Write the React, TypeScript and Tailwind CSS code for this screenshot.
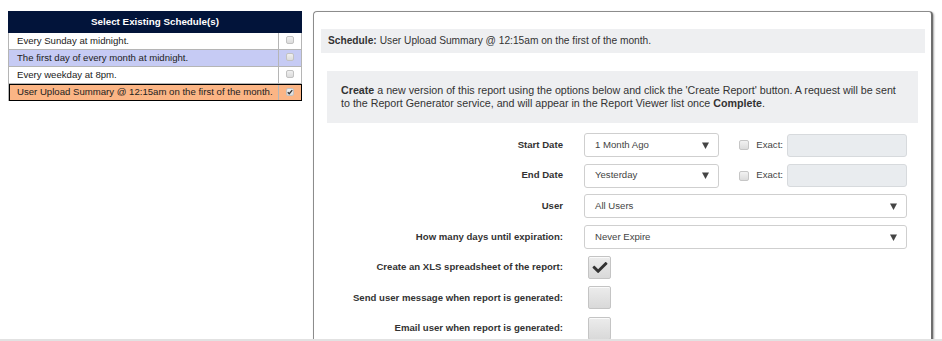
import React from "react";

const schedules = [
  { label: "Every Sunday at midnight.", tone: "plain", checked: false },
  { label: "The first day of every month at midnight.", tone: "hover", checked: false },
  { label: "Every weekday at 8pm.", tone: "plain", checked: false },
  { label: "User Upload Summary @ 12:15am on the first of the month.", tone: "active", checked: true },
];

const Arrow = () => (
  <svg width="7" height="7" viewBox="0 0 7 7" className="shrink-0">
    <path d="M0 0.5h7L3.5 7z" fill="#444" />
  </svg>
);

const TinyBox = ({ checked }: { checked: boolean }) => (
  <span className="inline-flex w-[8px] h-[8px] items-center justify-center rounded-[2px] border border-[#c2c2c2] bg-gradient-to-b from-[#f0f0f0] to-[#dcdcdc]">
    {checked && (
      <svg width="6" height="6" viewBox="0 0 8 8">
        <path d="M1 4.2l2 2L7 1.5" stroke="#333" strokeWidth="1.8" fill="none" />
      </svg>
    )}
  </span>
);

const BigBox = ({ checked }: { checked?: boolean }) => (
  <div className="w-[23px] h-[23px] rounded-[2px] border border-[#c4c4c4] bg-gradient-to-b from-[#ececec] to-[#d9d9d9] shadow-[inset_0_1px_0_#fafafa] flex items-center justify-center">
    {checked && (
      <svg width="16" height="15" viewBox="0 0 512 512">
        <path
          d="M173.9 439.4l-166.4-166.4c-10-10-10-26.2 0-36.2l36.2-36.2c10-10 26.2-10 36.2 0L192 312.7 432.1 72.6c10-10 26.2-10 36.2 0l36.2 36.2c10 10 10 26.2 0 36.2l-294.4 294.4c-10 10-26.2 10-36.2 0z"
          fill="#333"
        />
      </svg>
    )}
  </div>
);

const Select = ({ value, className }: { value: string; className: string }) => (
  <div
    className={`h-[24px] flex items-center justify-between pl-[10px] pr-[9px] rounded-[3px] border border-[#cfcfcf] bg-white text-[9.6px] text-[#444] ${className}`}
  >
    <span>{value}</span>
    <Arrow />
  </div>
);

const Exact = () => (
  <div className="flex items-center ml-[20px]">
    <span className="w-[10px] h-[10px] rounded-[2px] border border-[#c6c6c6] bg-gradient-to-b from-[#f2f2f2] to-[#dcdcdc]" />
    <span className="ml-[7px] text-[9.6px] text-[#444]">Exact:</span>
    <div className="ml-[4px] w-[120px] h-[23px] rounded-[3px] border border-[#d7dadd] bg-[#e9ecef]" />
  </div>
);

const Row = ({ label, children }: { label: string; children: React.ReactNode }) => (
  <div className="flex items-center">
    <div className="w-[236px] shrink-0 text-right font-bold text-[9.6px] text-[#333]">{label}</div>
    <div className="ml-[21px] w-[323px] flex items-center">{children}</div>
  </div>
);

export default function App() {
  return (
    <div
      className="w-[942px] h-[341px] overflow-hidden bg-white"
      style={{ fontFamily: '"Liberation Sans", Arial, sans-serif' }}
    >
      <div className="h-[339px] overflow-hidden flex items-start pl-[8px] pt-[11px]">
        <table className="w-[294px] border-collapse text-[9.6px] text-[#222] shrink-0">
          <thead>
            <tr>
              <th
                colSpan={2}
                className="h-[21px] bg-[#02143a] text-white font-bold text-[9.8px] text-center border border-[#02143a]"
              >
                Select Existing Schedule(s)
              </th>
            </tr>
          </thead>
          <tbody>
            {schedules.map((s) => (
              <tr
                key={s.label}
                className={
                  s.tone === "active"
                    ? "bg-[#fbb585] outline-[1.5px] outline-black -outline-offset-1"
                    : s.tone === "hover"
                      ? "bg-[#c6cbf4]"
                      : "bg-white"
                }
              >
                <td className="h-[17px] pl-[8px] border border-[#b5b5b5] text-left leading-none">
                  {s.label}
                </td>
                <td className="w-[23px] border border-[#b5b5b5] text-center leading-none">
                  <TinyBox checked={s.checked} />
                </td>
              </tr>
            ))}
          </tbody>
        </table>

        <div className="ml-[11px] w-[620px] h-[400px] shrink-0 rounded-[4px] border border-[#8c8c8c] border-r-2 border-r-[#6e6e6e] shadow-[1px_1px_2px_rgba(0,0,0,0.35)] pt-[17px] pl-[7px] pr-[6px]">
          <div className="h-[24px] flex items-center pl-[7px] bg-[#eeeff1] text-[10.2px] text-[#333]">
            <span className="font-bold">Schedule:</span>
            <span className="ml-[3px]">User Upload Summary @ 12:15am on the first of the month.</span>
          </div>

          <div className="mt-[18px] ml-[6px] mr-[7px] bg-[#eeeff1] py-[12.5px] pl-[14px] pr-[16px] text-[10.7px] leading-[13.5px] text-[#333]">
            <span className="font-bold">Create</span> a new version of this report using the options below and
            click the 'Create Report' button. A request will be sent to the Report Generator service, and will
            appear in the Report Viewer list once <span className="font-bold">Complete</span>.
          </div>

          <div className="mt-[10px] ml-[6px] flex flex-col gap-[6.7px]">
            <Row label="Start Date">
              <Select value="1 Month Ago" className="w-[136px]" />
              <Exact />
            </Row>
            <Row label="End Date">
              <Select value="Yesterday" className="w-[136px]" />
              <Exact />
            </Row>
            <Row label="User">
              <Select value="All Users" className="w-[323px]" />
            </Row>
            <Row label="How many days until expiration:">
              <Select value="Never Expire" className="w-[323px]" />
            </Row>
            <div className="flex flex-col gap-[7.5px]">
              <Row label="Create an XLS spreadsheet of the report:">
                <div className="ml-[4px]">
                  <BigBox checked />
                </div>
              </Row>
              <Row label="Send user message when report is generated:">
                <div className="ml-[4px]">
                  <BigBox />
                </div>
              </Row>
              <Row label="Email user when report is generated:">
                <div className="ml-[4px]">
                  <BigBox />
                </div>
              </Row>
            </div>
          </div>
        </div>
      </div>
      <div className="h-[2px] bg-[#e2e2e2]" />
    </div>
  );
}
